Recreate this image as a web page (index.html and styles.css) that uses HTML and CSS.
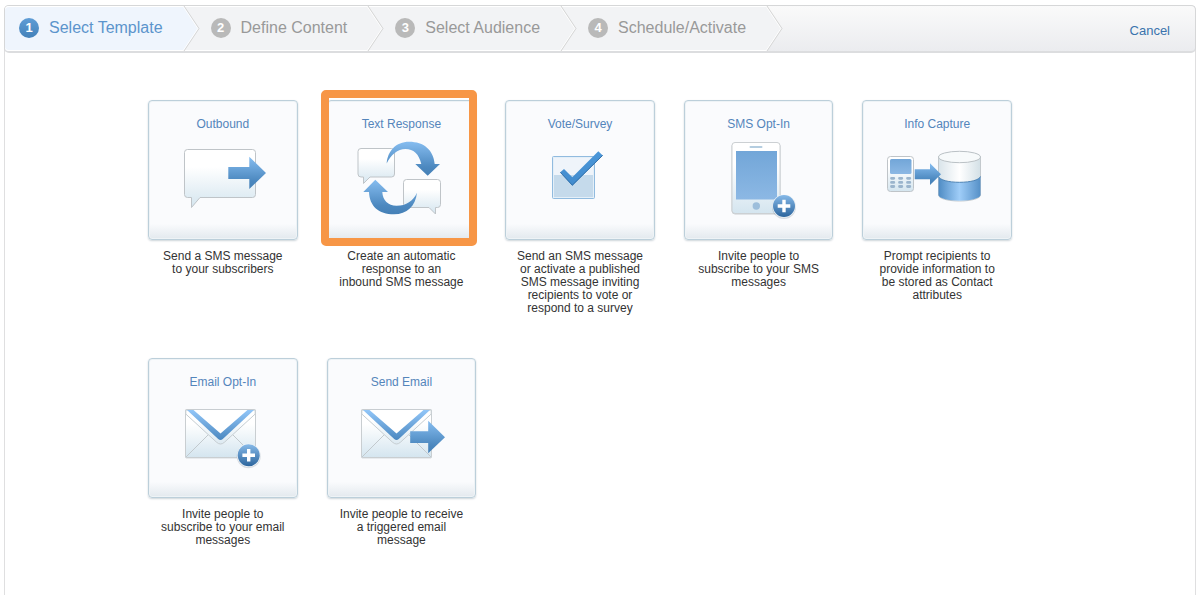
FILE: index.html
```html
<!DOCTYPE html>
<html lang="en">
<head>
<meta charset="utf-8">
<title>Select Template</title>
<link rel="stylesheet" href="styles.css">
</head>
<body>
<svg class="defs" width="0" height="0" aria-hidden="true">
  <defs>
    <linearGradient id="blue" x1="0" y1="0" x2="0" y2="1"><stop offset="0" stop-color="#86bdf0"/><stop offset=".75" stop-color="#4c88bf"/><stop offset="1" stop-color="#4580b6"/></linearGradient>
    <linearGradient id="paper" x1="0" y1="0" x2="0" y2="1"><stop offset=".3" stop-color="#fff"/><stop offset="1" stop-color="#d4e5ef"/></linearGradient>
    <linearGradient id="badge" x1="0" y1="0" x2="0" y2="1"><stop offset="0" stop-color="#86b9e8"/><stop offset="1" stop-color="#2c659d"/></linearGradient>
    <linearGradient id="screen" x1="0" y1="0" x2="0" y2="1"><stop offset="0" stop-color="#72a6d8"/><stop offset="1" stop-color="#8cb8e4"/></linearGradient>
    <linearGradient id="glass" x1="0" y1="0" x2="1" y2="0"><stop offset="0" stop-color="#d9e4ea"/><stop offset=".5" stop-color="#fff"/><stop offset="1" stop-color="#d3e0e6"/></linearGradient>
    <linearGradient id="fluid" x1="0" y1="0" x2="1" y2="0"><stop offset="0" stop-color="#4f8cc4"/><stop offset=".5" stop-color="#9fcdf8"/><stop offset="1" stop-color="#5590c7"/></linearGradient>
    <linearGradient id="fold" x1="0" y1="0" x2="0" y2="1"><stop offset="0" stop-color="#92c6f8"/><stop offset="1" stop-color="#4b88c0"/></linearGradient>
    <linearGradient id="flap" x1="0" y1="0" x2="0" y2="1"><stop offset=".3" stop-color="#fff"/><stop offset="1" stop-color="#dce9f1"/></linearGradient>
    <linearGradient id="tick" x1="0" y1="0" x2="0" y2="1"><stop offset="0" stop-color="#4b97d9"/><stop offset="1" stop-color="#428bcd"/></linearGradient>
    <g id="plus">
      <circle r="12" cy="1" fill="#5b6f80" opacity=".22"/>
      <circle r="11.6" fill="#f3f7fa"/>
      <circle r="11" fill="url(#badge)"/>
      <path d="M-6.3 0H6.3M0-6.3V6.3" stroke="#fff" stroke-width="3.4"/>
    </g>
    <g id="envelope">
      <rect x="36.5" y="16" width="70" height="48" rx="1" fill="none" stroke="#aab4bb" opacity=".45"/>
      <rect x="36.5" y="15.5" width="70" height="48" rx="1" fill="url(#paper)" stroke="#c9ced1"/>
      <path d="M37 63 59.5 40.5M106 63 83.5 40.5" stroke="#c2c9cd" fill="none"/>
      <path d="M36.8 20 67.5 48.2Q71.5 51.8 75.5 48.2L106.2 20V16H36.8Z" fill="url(#flap)" stroke="#c6cdd1"/>
      <path d="M44 16H99L71.5 39.5Z" fill="#fff"/>
      <path d="M38 16H44.5L71.5 39.5 98.5 16H105L73.8 45Q71.5 46.8 69.2 45Z" fill="url(#fold)"/>
    </g>
  </defs>
</svg>
<div class="wizard">
  <header class="bar">
    <ol class="steps">
      <li class="step current" aria-current="step"><span class="num">1</span><span>Select Template</span>
        <svg class="chevron" viewBox="0 0 16 46" preserveAspectRatio="none" aria-hidden="true"><path class="fill" d="M0 0 15 23 0 46Z"/><path class="glow" d="M-1 0 14 23-1 46"/><path class="edge" d="M0 0 15 23 0 46"/></svg></li>
      <li class="step"><span class="num">2</span><span>Define Content</span>
        <svg class="chevron" viewBox="0 0 16 46" preserveAspectRatio="none" aria-hidden="true"><path class="fill" d="M0 0 15 23 0 46Z"/><path class="glow" d="M-1 0 14 23-1 46"/><path class="edge" d="M0 0 15 23 0 46"/></svg></li>
      <li class="step"><span class="num">3</span><span>Select Audience</span>
        <svg class="chevron" viewBox="0 0 16 46" preserveAspectRatio="none" aria-hidden="true"><path class="fill" d="M0 0 15 23 0 46Z"/><path class="glow" d="M-1 0 14 23-1 46"/><path class="edge" d="M0 0 15 23 0 46"/></svg></li>
      <li class="step"><span class="num">4</span><span>Schedule/Activate</span>
        <svg class="chevron" viewBox="0 0 16 46" preserveAspectRatio="none" aria-hidden="true"><path class="fill" d="M0 0 15 23 0 46Z"/><path class="glow" d="M-1 0 14 23-1 46"/><path class="edge" d="M0 0 15 23 0 46"/></svg></li>
    </ol>
    <a class="cancel" href="#">Cancel</a>
  </header>
  <main class="templates">
    <section class="template">
      <button class="card" type="button" aria-describedby="d1"><span>Outbound</span>
        <svg class="art" viewBox="0 0 148 86" aria-hidden="true">
          <path d="M38.5 13.5H103.5Q106.5 13.5 106.5 16.5V58.5Q106.5 61.5 103.5 61.5H51L42.5 71.5V61.5H38.5Q35.5 61.5 35.5 58.5V16.5Q35.5 13.5 38.5 13.5Z" fill="url(#paper)" stroke="#bfc4c8"/>
          <path d="M79.3 31H100.3V20.8L117 37 100.3 53V43H79.3Z" fill="url(#blue)"/>
        </svg></button>
      <p id="d1">Send a SMS message to your subscribers</p>
    </section>
    <section class="template">
      <button class="card selected" type="button" aria-pressed="true" aria-describedby="d2"><span>Text Response</span>
        <svg class="art" viewBox="0 0 148 86" aria-hidden="true">
          <path d="M34 12.5H64.5Q67.5 12.5 67.5 15.5V38Q67.5 41 64.5 41H43L36.5 47.5V41H34Q31 41 31 38V15.5Q31 12.5 34 12.5Z" fill="url(#paper)" stroke="#bfc4c8"/>
          <path d="M79.5 43.5H110.5Q113.5 43.5 113.5 46.5V68.5Q113.5 71.5 110.5 71.5H108.5V78L102 71.5H79.5Q76.5 71.5 76.5 68.5V46.5Q76.5 43.5 79.5 43.5Z" fill="url(#paper)" stroke="#bfc4c8"/>
          <path d="M59.7 27.5C60.5 15 69 5.7 82 5.7C97 5.7 106.500 14 107.7 28H113L100.7 39.7 88.3 28H94.3C92 18 86.5 13 78.5 13C70.5 13 64 18.5 59.7 27.5Z" fill="url(#blue)"/>
          <path d="M48.3 43.7 61 56H55.3C55.8 64.5 61 69.7 69.5 69.7C79.5 69.7 86 65 90 56.7C88.5 70 80 78.3 67 78.3C51.5 78.3 42.5 70 42 56H36.3Z" fill="url(#blue)"/>
        </svg></button>
      <p id="d2">Create an automatic response to an<br>inbound SMS message</p>
    </section>
    <section class="template">
      <button class="card" type="button" aria-describedby="d3"><span>Vote/Survey</span>
        <svg class="art" viewBox="0 0 148 86" aria-hidden="true">
          <rect x="46.5" y="20.5" width="42" height="42" rx="1" fill="#eff4fa" stroke="#91bbdf"/>
          <rect x="48" y="39" width="39" height="22" fill="#c5daeb"/>
          <rect x="47.5" y="21.5" width="40" height="40" fill="none" stroke="#e4eff8"/>
          <path d="M54.3 36.3 58 33 66.3 41.3 92.3 15.3 96.7 19.5 66.3 49.7Z" fill="url(#tick)"/>
          <path d="M54.3 36.3 66.3 49.2 96.7 19.3" fill="none" stroke="#326fa8"/>
        </svg></button>
      <p id="d3">Send an SMS message or activate a published SMS message inviting recipients to vote or respond to a survey</p>
    </section>
    <section class="template">
      <button class="card" type="button" aria-describedby="d4"><span>SMS Opt-In</span>
        <svg class="art" viewBox="0 0 148 86" aria-hidden="true">
          <rect x="47" y="7" width="48" height="71" rx="3" fill="none" stroke="#abb3b8" opacity=".6"/>
          <rect x="47" y="6.5" width="48" height="71" rx="3" fill="url(#paper)" stroke="#ccd0d3"/>
          <rect x="51" y="15" width="41" height="48.5" fill="url(#screen)"/>
          <rect x="64.5" y="10" width="13" height="2" rx="1" fill="#b4cde0"/>
          <circle cx="71.3" cy="70" r="3.7" fill="#9dbedb"/>
          <use href="#plus" x="99" y="70"/>
        </svg></button>
      <p id="d4">Invite people to subscribe to your SMS messages</p>
    </section>
    <section class="template">
      <button class="card" type="button" aria-describedby="d5"><span>Info Capture</span>
        <svg class="art" viewBox="0 0 148 86" aria-hidden="true">
          <rect x="24.5" y="20.5" width="26" height="35" rx="3" fill="url(#paper)" stroke="#bfc4c8"/>
          <rect x="27" y="23" width="21.5" height="15" rx="1.5" fill="url(#screen)"/>
          <path d="M28.5 42.3h2.3M36.5 42.3h2.3M44.5 42.3h2.3M28.5 46.4h2.3M36.5 46.4h2.3M44.5 46.4h2.3M28.5 50.5h2.3M36.5 50.5h2.3M44.5 50.5h2.3" stroke="#9bb5cd" stroke-width="2.8" stroke-linecap="round"/>
          <path d="M75.5 21V59C75.5 62.3 84 65 96.5 65S117.5 62.3 117.5 59V21Z" fill="url(#glass)" stroke="#c3c9cd"/>
          <path d="M75.5 40.5C77 44 85 46.3 96.5 46.3S116 44 117.5 40.5V59C117.5 62 108.5 64.7 96.5 64.7S75.5 62 75.5 59Z" fill="url(#fluid)"/>
          <path d="M75.5 40.5C77 44 85 46.3 96.5 46.3S116 44 117.5 40.5" fill="none" stroke="#4c83b5"/>
          <ellipse cx="96.5" cy="21" rx="21" ry="5.7" fill="#f7fafb" stroke="#bac1c5"/>
          <path d="M51.7 33.3H67V27.3L78 38.3 67 49V43.3H51.7Z" fill="url(#blue)"/>
        </svg></button>
      <p id="d5">Prompt recipients to provide information to be stored as Contact attributes</p>
    </section>
    <section class="template">
      <button class="card" type="button" aria-describedby="d6"><span>Email Opt-In</span>
        <svg class="art" viewBox="0 0 148 86" aria-hidden="true">
          <use href="#envelope"/>
          <use href="#plus" x="99.7" y="61.3"/>
        </svg></button>
      <p id="d6">Invite people to subscribe to your email messages</p>
    </section>
    <section class="template">
      <button class="card" type="button" aria-describedby="d7"><span>Send Email</span>
        <svg class="art" viewBox="0 0 148 86" aria-hidden="true">
          <use href="#envelope" x="-2"/>
          <path d="M83.2 37.3H101.2V26.8L118 43.3 101.2 59.3V49H83.2Z" fill="url(#blue)"/>
        </svg></button>
      <p id="d7">Invite people to receive a triggered email message</p>
    </section>
  </main>
</div>
</body>
</html>
```
FILE: styles.css
```css
* { box-sizing: border-box; }
body {
  margin: 0;
  min-height: 100vh;
  padding: 5px 5px 4px 4px;
  display: flex;
  background: #fff;
  font-family: "Liberation Sans", Arial, sans-serif;
  font-size: 12px;
}
.defs { position: absolute; }
.wizard {
  flex: 1;
  min-width: 0;
  border: solid #dfdfe0;
  border-width: 0 1px;
  border-radius: 5px 5px 0 0;
}
.bar {
  display: flex;
  justify-content: space-between;
  align-items: stretch;
  margin: 0 -1px;
  border: 1px solid #d6d7d8;
  border-bottom: 2px solid #dcdddf;
  border-radius: 5px;
  background: linear-gradient(#fafafa, #ebecef);
}
.steps {
  display: flex;
  margin: 0;
  padding: 0;
  list-style: none;
}
.step {
  position: relative;
  display: flex;
  align-items: center;
  gap: 10px;
  height: 45px;
  padding: 0 21px 2px 27px;
  background: #f2f3f5;
  box-shadow: inset 0 1px #fff, inset 0 -1px #fff;
  color: #999;
  font-size: 16px;
  line-height: 20px;
  white-space: nowrap;
}
.step:nth-child(1) { z-index: 4; }
.step:nth-child(2) { z-index: 3; }
.step:nth-child(3) { z-index: 2; }
.step.current {
  padding-left: 14px;
  border-radius: 4px 0 0 4px;
  background: #eff5fd;
  color: #5b94cc;
}
.num {
  width: 20px;
  height: 20px;
  border-radius: 50%;
  background: #b9b9b9;
  color: #fff;
  font-size: 13px;
  font-weight: bold;
  text-align: center;
}
.current .num { background: linear-gradient(#5f9dd6, #4381b9); }
.chevron {
  position: absolute;
  top: 0;
  left: 100%;
  width: 16px;
  height: 100%;
  overflow: visible;
  fill: none;
}
.chevron .fill { fill: #f2f3f5; }
.current .chevron .fill { fill: #eff5fd; }
.chevron .glow { stroke: #fff; }
.chevron .edge { stroke: #d5d5d5; }
.cancel {
  align-self: center;
  padding: 4px 25px 0 0;
  color: #3a73ad;
  font-size: 13px;
  line-height: 16px;
  text-decoration: none;
}
.templates {
  display: grid;
  grid-template-columns: repeat(5, minmax(0, 1fr));
  gap: 43px 29px;
  max-width: 1007px;
  padding: 47px 0 24px 143px;
}
.card {
  position: relative;
  display: flex;
  flex-direction: column;
  align-items: center;
  gap: 4px;
  width: 100%;
  height: 140px;
  padding: 15px 0 0;
  border: 1px solid #bccfda;
  border-radius: 4px;
  background: linear-gradient(#fafbfd 89%, #e3e9ee);
  box-shadow: inset 0 0 0 1px #eef3f6, 0 1px 2px #cdd5da;
  color: #5485bb;
  font: inherit;
  line-height: 16px;
  cursor: pointer;
}
.selected::after {
  content: "";
  position: absolute;
  inset: -11px -2px -7px -7px;
  border: 8px solid #f79646;
  border-radius: 5px;
}
.art {
  flex: none;
  width: 148px;
  height: 86px;
}
.template p {
  margin: 0;
  padding: 10px 10px 0;
  color: #333;
  line-height: 13px;
  text-align: center;
}
```
